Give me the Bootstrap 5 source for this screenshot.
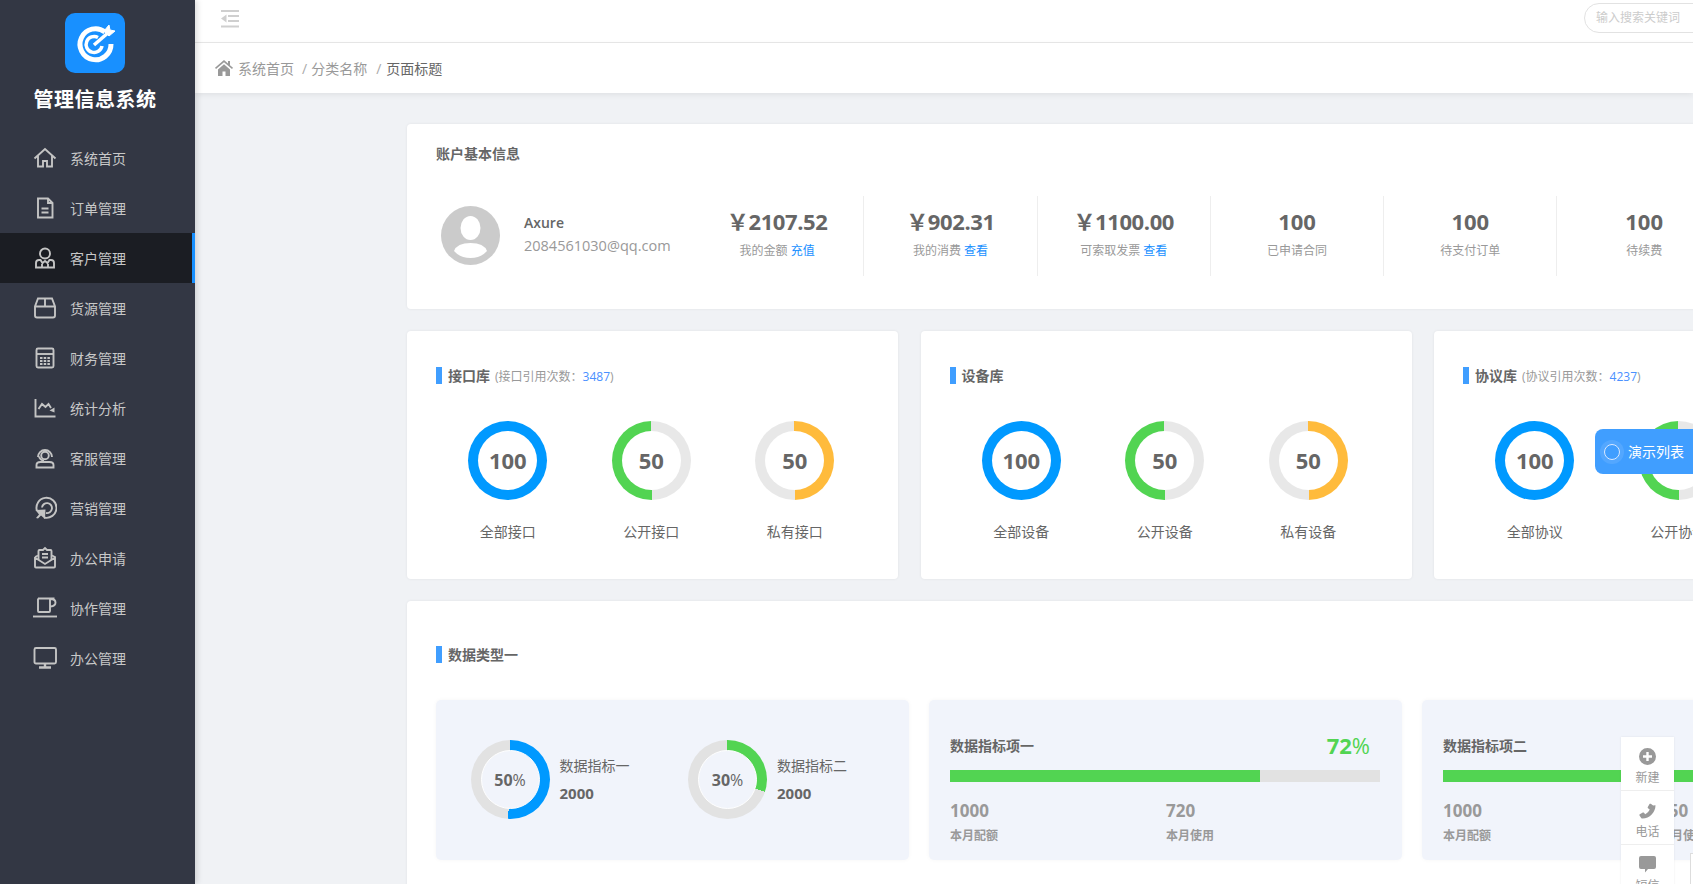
<!DOCTYPE html>
<html lang="zh-CN">
<head>
<meta charset="utf-8">
<title>管理信息系统</title>
<link href="https://cdn.jsdelivr.net/npm/bootstrap@5.3.0/dist/css/bootstrap.min.css" rel="stylesheet">
<style>
html,body{height:100%;overflow:hidden}
body{font-family:"Open Sans","Noto Sans CJK SC",sans-serif;background:#f0f2f5;color:#666;font-size:14px}
.app-shell{width:1693px;height:884px;overflow:hidden;position:relative}
.side{width:195px;flex:none;background:#333744;box-shadow:2px 0 6px rgba(0,0,0,.15);z-index:3;padding-top:13px}
.logo-box{width:60px;height:60px;border-radius:10px;background:#1890ff;margin-left:65px}
.brand{color:#fff;font-size:20px;font-weight:700;line-height:26px;margin:14px 5px 20px 0;text-align:center;letter-spacing:.5px}
.side-link{height:50px;padding-left:33px;color:#c8c8c8;font-size:14px;text-decoration:none;gap:13px;flex:none}
.side-link svg{width:24px;height:24px;fill:none;stroke:#c4c4c4;stroke-width:1.9;flex:none}
.side-link.on{background:#1b1d23;border-right:3px solid #1890ff}
.main-col{flex:1;min-width:0}
.topbar{height:43px;flex:none;background:#fff;border-bottom:1px solid #e8e8e8;padding-left:26px;padding-right:0}
.fold-icon{margin-top:-5px}
.search-pill{width:180px;height:30px;flex:none;border:1px solid #e2e2e2;border-radius:15px 0 0 15px;color:#ccc;font-size:12px;padding-left:11px;margin-right:-71px;margin-top:-6px}
.crumbs{height:50px;flex:none;background:#fff;padding-left:20px;box-shadow:0 2px 6px rgba(0,0,0,.07);color:#999;position:relative;z-index:1}
.crumbs svg{margin-right:5px}
.crumbs .sep{color:#aaa;margin:0 4px 0 8px}
.crumbs .sep.last-sep{margin:0 5px 0 9px}
.crumbs .cur{color:#666}
.pane{padding:31px 0 0 212px;width:1730px;flex:none}
.box{background:#fff;border-radius:4px;box-shadow:0 0 3px rgba(0,0,0,.07);}
.acct{height:185px;padding:20px 29px 0;margin-bottom:22px;width:1518px}
.box-title{font-size:14px;font-weight:700;color:#666;line-height:20px}
.acct-row{margin-top:32px;height:80px}
.who{width:255px;flex:none;padding-left:5px;gap:24px}
.avatar{width:59px;height:59px;flex:none;margin-top:-2px}
.who-name{font-size:14px;font-weight:600;line-height:20px;color:#666}
.who-mail{font-size:14.500px;line-height:26px;color:#999}
.stat-cell{width:173.300px;flex:none;border-right:1px solid #eee;text-align:center;padding-top:10px}
.stat-cell:last-child{border-right:0}
.stat-num{font-size:22px;font-weight:700;line-height:30px;color:#666}
.stat-num.money{letter-spacing:-.4px}
.stat-txt{font-size:12px;line-height:18px;margin-top:6px;color:#999}
.blue-txt{color:#1890ff}
.tri{display:grid;grid-template-columns:491px 491px 491px;column-gap:22.500px;margin-bottom:22px;width:1518px}
.lib{height:248px;padding:36px 0 0 29px}
.bar-title{height:17px;border-left:6px solid #409eff;padding-left:6px;font-size:14px;font-weight:700;color:#666;line-height:17px}
.bar-title small{font-size:12px;font-weight:400;color:#999;margin-left:5px}
.bar-title small b{font-weight:400;color:#4a90ff}
.rings{margin-top:37px}
.ring-col{width:143.500px;text-align:center;flex:none}
.ring-a{width:79px;height:79px;border-radius:50%;margin:0 auto;display:flex;align-items:center;justify-content:center}
.ring-a span{width:59px;height:59px;border-radius:50%;background:#fff;font-size:22px;font-weight:700;color:#666;display:flex;align-items:center;justify-content:center}
.ring-lbl{font-size:14px;line-height:20px;margin-top:22px;color:#666}
.data-box{padding:45px 0 0 29px;height:400px;width:1518px}
.tiles{display:grid;grid-template-columns:473px 473px 473px;column-gap:20px;margin-top:37px}
.tile{height:160px;background:#f1f4fb;border-radius:5px;box-shadow:0 0 4px rgba(0,0,0,.04)}
.donut-wrap{padding:40px 0 0 34.500px}
.donut-item{width:217.500px;flex:none;gap:10px}
.ring-b{width:79px;height:79px;border-radius:50%;display:flex;align-items:center;justify-content:center;flex:none}
.ring-b span{width:59px;height:59px;border-radius:50%;background:#f1f4fb;border:1px solid #fff;font-size:16px;color:#666;display:flex;align-items:center;justify-content:center}
.ring-b b{font-weight:700}
.donut-lbl{font-size:14px;line-height:20px;color:#666;margin-bottom:7px}
.donut-val{font-size:15px;font-weight:700;line-height:20px;color:#666}
.meter{padding:31px 0 0 21px;width:473px}
.meter-head{height:28px;padding-right:31px;width:451px}
.meter-name{font-size:14px;font-weight:700;color:#666}
.meter-pct{font-size:22px;color:#52d452;font-weight:400;line-height:28px}
.meter-pct b{font-weight:700}
.meter-track{height:12px;background:#e2e2e2;width:430px;margin-top:11px}
.meter-fill{height:12px;background:#52d452}
.meter-stats{margin-top:17px}
.meter-stats > div{width:216px;flex:none}
.m-num{font-size:17px;font-weight:700;color:#999;line-height:24px}
.m-lbl{font-size:12px;font-weight:700;color:#999;line-height:18px;margin-top:4px}
.demo-tab{position:absolute;left:1595px;top:429px;width:140px;height:45px;background:#409eff;border-radius:8px 0 0 8px;color:#fff;font-size:14px;padding-left:9px;gap:8px;z-index:5}
.demo-dot{width:16px;height:16px;border:1.500px solid #dbeaff;border-radius:50%;box-shadow:0 0 0 4px rgba(255,255,255,.1);flex:none}
.tools{position:absolute;left:1621px;top:737px;width:53px;background:#fff;z-index:6;box-shadow:0 0 2px rgba(0,0,0,.08)}
.tool-item{height:54px;border-bottom:1px solid #eee;text-align:center;color:#999;font-size:12px;line-height:16px;padding-top:11px}
.tool-item svg{display:block;margin:0 auto 5px;width:17px;height:17px;fill:#999}
.corner-box{position:absolute;left:1690px;top:853px;width:20px;height:40px;background:#fff;border:1px solid #ddd;z-index:7}
</style>
</head>
<body>
<div class="app-shell d-flex">
  <aside class="side d-flex flex-column">
    <div class="logo-box d-flex align-items-center justify-content-center">
      <svg width="60" height="60" viewBox="0 0 60 60" fill="none" stroke="#fff">
        <path d="M40 19A15.500 15.500 0 1 0 46 31" stroke-width="5"/>
        <path d="M33 24.500A8 8 0 1 0 37 33" stroke-width="3.500"/>
        <path d="M29 32L44 19" stroke-width="3.500"/>
        <path d="M39 18l5-6 1 5 5 1-6 5z" fill="#fff" stroke-width="1"/>
      </svg>
    </div>
    <div class="brand">管理信息系统</div>
    <nav class="d-flex flex-column">
      <a class="side-link d-flex align-items-center" href="#"><svg viewBox="0 0 24 24"><path d="M1.500 12.500L12 3l10.500 9.500M5 10v10.500h5V15h4v5.500h5V10"/></svg>系统首页</a>
      <a class="side-link d-flex align-items-center" href="#"><svg viewBox="0 0 24 24"><path d="M5 2.500h10l4.500 4.500v14.500H5zM15 2.500V7h4.500M8.500 12.500h7M8.500 16.500h7"/></svg>订单管理</a>
      <a class="side-link on d-flex align-items-center" href="#"><svg viewBox="0 0 24 24"><circle cx="12" cy="7.500" r="5"/><path d="M3 21.500v-4.500q0-3 3-3h1.500l2 3 2.500-2 2.500 2 2-3H18q3 0 3 3v4.500zM9 18v3.500M15 18v3.500"/></svg>客户管理</a>
      <a class="side-link d-flex align-items-center" href="#"><svg viewBox="0 0 24 24"><path d="M5 2.500h14l3 8v9q0 2-2 2H4q-2 0-2-2v-9zM2 10.500h20M12 2.500v8"/></svg>货源管理</a>
      <a class="side-link d-flex align-items-center" href="#"><svg viewBox="0 0 24 24"><rect x="3.500" y="2.500" width="17" height="19" rx="1.500"/><path d="M3.500 8h17"/><path d="M7 12h10M7 15h10M7 18h10" stroke-width="2.200" stroke-dasharray="2.500 1.200"/></svg>财务管理</a>
      <a class="side-link d-flex align-items-center" href="#"><svg viewBox="0 0 24 24"><path d="M2.500 3v17.500H22.500"/><path d="M5.500 13l3.500-5 3.500 3 3-3 2.500 4" /><path d="M16.500 14.500l5 2v-5z" fill="#c4c4c4" stroke="none"/></svg>统计分析</a>
      <a class="side-link d-flex align-items-center" href="#"><svg viewBox="0 0 24 24"><path d="M5 11a7 7 0 1 1 14 0"/><circle cx="12" cy="9.500" r="3.800"/><path d="M6 10.500q1 3.500 5 4"/><path d="M7.500 16h9q4 0 4 3v2.500H3.500V19q0-3 4-3z"/></svg>客服管理</a>
      <a class="side-link d-flex align-items-center" href="#"><svg viewBox="0 0 24 24"><path d="M4 15A10 10 0 1 1 11 21.500"/><path d="M9 11.500a5 5 0 1 1 4 5.500"/><path d="M3 22l3-3.500L2.500 14l10-.5-.5 9.500-4-3.500-3 3z" fill="#c4c4c4" stroke="none"/></svg>营销管理</a>
      <a class="side-link d-flex align-items-center" href="#"><svg viewBox="0 0 24 24"><path d="M2 11v9.500q0 1 1 1h18q1 0 1-1V11l-3-1.500M2 11l3-1.500M2.500 12l9.500 6 9.500-6"/><path d="M5.500 14V5q0-1 1-1h3.500L12 2l2 2h3.500q1 0 1 1v9"/><path d="M9 8h6M9 11.500h6"/></svg>办公申请</a>
      <a class="side-link d-flex align-items-center" href="#"><svg viewBox="0 0 24 24"><path d="M5 2.500h16.500M5 2.500v12.500q0 1 1 1h10q1 0 1-1V2.500M17.500 3q5 0 5 3.500t-5 4"/><path d="M0 20.500h24"/></svg>协作管理</a>
      <a class="side-link d-flex align-items-center" href="#"><svg viewBox="0 0 24 24"><rect x="1.500" y="2" width="21.500" height="15.500" rx="1.500"/><path d="M12 17.500v4M6 21.500h12" stroke-width="2.400"/></svg>办公管理</a>
    </nav>
  </aside>

  <div class="main-col d-flex flex-column">
    <header class="topbar d-flex align-items-center justify-content-between">
      <svg class="fold-icon" width="18" height="18" viewBox="0 0 18 18" fill="#cfcfcf"><rect x="0" y="0" width="18" height="2"/><rect x="7" y="5" width="11" height="2"/><rect x="7" y="10" width="11" height="2"/><rect x="0" y="15.500" width="18" height="2"/><path d="M5.500 4.500v8L0 8.500z"/></svg>
      <div class="search-pill d-flex align-items-center">输入搜索关键词</div>
    </header>
    <div class="crumbs d-flex align-items-center">
      <svg width="18" height="16" viewBox="0 0 18 16" fill="#999"><path d="M9 0L0 7.800l1 1.200L9 2.200 17 9l1-1.200-3-2.600V1h-2v2.500zM3 9.500V16h4.500v-4.500h3V16H15V9.500L9 4.200z"/></svg>
      <span>系统首页</span><span class="sep">/</span><span>分类名称</span><span class="sep last-sep">/</span><span class="cur">页面标题</span>
    </div>

    <main class="pane">
      <section class="box acct">
        <div class="box-title">账户基本信息</div>
        <div class="acct-row d-flex">
          <div class="who d-flex align-items-center">
            <svg class="avatar" viewBox="0 0 59 59"><circle cx="29.500" cy="29.500" r="29.500" fill="#cbcbcb"/><ellipse cx="29.500" cy="22" rx="10" ry="12" fill="#fff"/><path d="M13 45q3-8 16.500-8T46 45q-6 7-16.500 7T13 45z" fill="#fff"/></svg>
            <div><div class="who-name">Axure</div><div class="who-mail">2084561030@qq.com</div></div>
          </div>
          <div class="stat-cell"><div class="stat-num money">￥2107.52</div><div class="stat-txt">我的金额 <span class="blue-txt">充值</span></div></div>
          <div class="stat-cell"><div class="stat-num money">￥902.31</div><div class="stat-txt">我的消费 <span class="blue-txt">查看</span></div></div>
          <div class="stat-cell"><div class="stat-num money">￥1100.00</div><div class="stat-txt">可索取发票 <span class="blue-txt">查看</span></div></div>
          <div class="stat-cell"><div class="stat-num">100</div><div class="stat-txt">已申请合同</div></div>
          <div class="stat-cell"><div class="stat-num">100</div><div class="stat-txt">待支付订单</div></div>
          <div class="stat-cell"><div class="stat-num">100</div><div class="stat-txt">待续费</div></div>
        </div>
      </section>

      <div class="tri">
        <section class="box lib">
          <div class="bar-title">接口库<small>(接口引用次数：<b>3487</b>)</small></div>
          <div class="rings d-flex">
            <div class="ring-col"><div class="ring-a" style="background:conic-gradient(#0099ff 0 100%)"><span>100</span></div><div class="ring-lbl">全部接口</div></div>
            <div class="ring-col"><div class="ring-a" style="background:conic-gradient(#e8e8e8 0 50%,#52d452 50% 100%)"><span>50</span></div><div class="ring-lbl">公开接口</div></div>
            <div class="ring-col"><div class="ring-a" style="background:conic-gradient(#ffbb3c 0 50%,#e8e8e8 50% 100%)"><span>50</span></div><div class="ring-lbl">私有接口</div></div>
          </div>
        </section>
        <section class="box lib">
          <div class="bar-title">设备库</div>
          <div class="rings d-flex">
            <div class="ring-col"><div class="ring-a" style="background:conic-gradient(#0099ff 0 100%)"><span>100</span></div><div class="ring-lbl">全部设备</div></div>
            <div class="ring-col"><div class="ring-a" style="background:conic-gradient(#e8e8e8 0 50%,#52d452 50% 100%)"><span>50</span></div><div class="ring-lbl">公开设备</div></div>
            <div class="ring-col"><div class="ring-a" style="background:conic-gradient(#ffbb3c 0 50%,#e8e8e8 50% 100%)"><span>50</span></div><div class="ring-lbl">私有设备</div></div>
          </div>
        </section>
        <section class="box lib">
          <div class="bar-title">协议库<small>(协议引用次数：<b>4237</b>)</small></div>
          <div class="rings d-flex">
            <div class="ring-col"><div class="ring-a" style="background:conic-gradient(#0099ff 0 100%)"><span>100</span></div><div class="ring-lbl">全部协议</div></div>
            <div class="ring-col"><div class="ring-a" style="background:conic-gradient(#e8e8e8 0 50%,#52d452 50% 100%)"><span>50</span></div><div class="ring-lbl">公开协议</div></div>
            <div class="ring-col"><div class="ring-a" style="background:conic-gradient(#ffbb3c 0 50%,#e8e8e8 50% 100%)"><span>50</span></div><div class="ring-lbl">私有协议</div></div>
          </div>
        </section>
      </div>

      <section class="box data-box">
        <div class="bar-title">数据类型一</div>
        <div class="tiles">
          <div class="tile donut-wrap d-flex align-items-start">
            <div class="donut-item d-flex align-items-center">
              <div class="ring-b" style="background:conic-gradient(#0099ff 0 51%,#e2e2e2 51% 100%)"><span><b>50</b>%</span></div>
              <div><div class="donut-lbl">数据指标一</div><div class="donut-val">2000</div></div>
            </div>
            <div class="donut-item d-flex align-items-center">
              <div class="ring-b" style="background:conic-gradient(#52d452 0 30%,#e2e2e2 30% 100%)"><span><b>30</b>%</span></div>
              <div><div class="donut-lbl">数据指标二</div><div class="donut-val">2000</div></div>
            </div>
          </div>
          <div class="tile meter">
            <div class="meter-head d-flex align-items-center justify-content-between"><span class="meter-name">数据指标项一</span><span class="meter-pct"><b>72</b>%</span></div>
            <div class="meter-track"><div class="meter-fill" style="width:72%"></div></div>
            <div class="meter-stats d-flex">
              <div><div class="m-num">1000</div><div class="m-lbl">本月配额</div></div>
              <div><div class="m-num">720</div><div class="m-lbl">本月使用</div></div>
            </div>
          </div>
          <div class="tile meter">
            <div class="meter-head d-flex align-items-center justify-content-between"><span class="meter-name">数据指标项二</span><span class="meter-pct"><b>75</b>%</span></div>
            <div class="meter-track"><div class="meter-fill" style="width:75%"></div></div>
            <div class="meter-stats d-flex">
              <div><div class="m-num">1000</div><div class="m-lbl">本月配额</div></div>
              <div><div class="m-num">750</div><div class="m-lbl">本月使用</div></div>
            </div>
          </div>
        </div>
      </section>
    </main>
  </div>

  <div class="demo-tab d-flex align-items-center"><span class="demo-dot"></span>演示列表</div>
  <div class="tools">
    <div class="tool-item"><svg viewBox="0 0 17 17"><path fill-rule="evenodd" d="M8.500 0a8.500 8.500 0 1 0 0 17 8.500 8.500 0 0 0 0-17zM7.300 4h2.400v3.300H13v2.400H9.700V13H7.300V9.700H4V7.300h3.300z"/></svg>新建</div>
    <div class="tool-item"><svg viewBox="0 0 17 17"><path d="M16.500 3.300c0 7.200-5.800 13.200-13 13.200-.6 0-1-.2-1.300-.6L.5 13.600c-.3-.4-.2-1 .3-1.300l3-1.700c.4-.2.900-.1 1.200.2l1.200 1.400c2-1 3.500-2.700 4.500-4.700L9 6.300c-.4-.3-.5-.8-.2-1.200l1.700-3c.3-.5.9-.6 1.300-.3l2.300 1.700"/></svg>电话</div>
    <div class="tool-item"><svg viewBox="0 0 17 17"><path d="M2 0h13q2 0 2 2v9q0 2-2 2H9l-3 3.500V13H2q-2 0-2-2V2q0-2 2-2z"/></svg>短信</div>
  </div>
  <div class="corner-box"></div>
</div>
<script src="https://cdn.jsdelivr.net/npm/bootstrap@5.3.0/dist/js/bootstrap.bundle.min.js"></script>
</body>
</html>
